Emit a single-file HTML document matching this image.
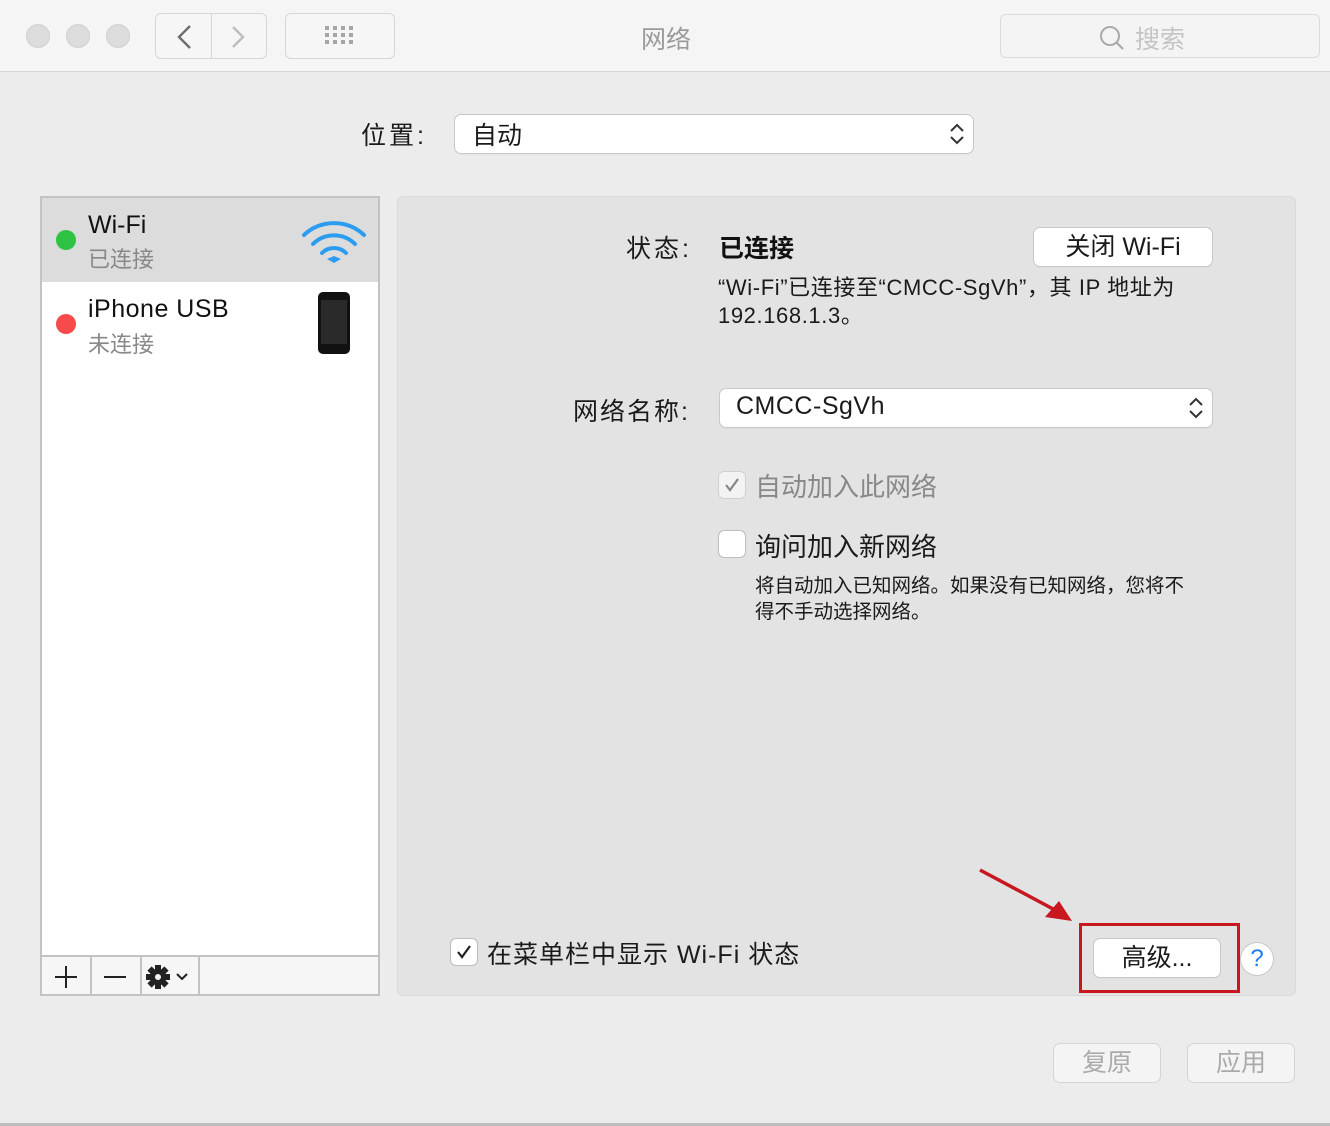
<!DOCTYPE html>
<html><head><meta charset="utf-8">
<style>
*{margin:0;padding:0;box-sizing:border-box}
body{width:1330px;height:1126px;background:#ececec;font-family:"Liberation Sans","Noto Sans CJK SC",sans-serif;color:#222;position:relative;overflow:hidden}
.a{position:absolute;white-space:nowrap}
.btn{position:absolute;background:#fff;border-radius:6px;box-shadow:0 0 0 1px #c8c8c8,0 1px 1px rgba(0,0,0,.15);text-align:center}
.cb{position:absolute;width:26px;height:26px;border-radius:5px;background:#fff;box-shadow:0 0 0 1px #bdbdbd}
</style></head><body>
<div class="a" style="left:0;top:0;width:1330px;height:72px;background:#f5f5f5;border-bottom:1px solid #d4d4d4"></div>
<div class="a" style="left:26px;top:24px;width:24px;height:24px;border-radius:50%;background:#dcdcdc;border:1px solid #d0d0d0"></div>
<div class="a" style="left:66px;top:24px;width:24px;height:24px;border-radius:50%;background:#dcdcdc;border:1px solid #d0d0d0"></div>
<div class="a" style="left:106px;top:24px;width:24px;height:24px;border-radius:50%;background:#dcdcdc;border:1px solid #d0d0d0"></div>
<div class="a" style="left:155px;top:13px;width:57px;height:46px;border:1px solid #d6d6d6;border-radius:6px 0 0 6px;background:#f6f6f6"></div>
<div class="a" style="left:211px;top:13px;width:56px;height:46px;border:1px solid #d6d6d6;border-radius:0 6px 6px 0;background:#f6f6f6"></div>
<svg class="a" style="left:170px;top:22px" width="100" height="30"><path d="M20 4 L9 15 L20 26" stroke="#6e6e6e" stroke-width="2.4" fill="none"/><path d="M63 5 L73 15 L63 25" stroke="#bdbdbd" stroke-width="2.4" fill="none"/></svg>
<div class="a" style="left:285px;top:13px;width:110px;height:46px;border:1px solid #d6d6d6;border-radius:6px;background:#f6f6f6"></div>
<svg class="a" style="left:325px;top:26px" width="30" height="20" fill="#a6a6a6"><rect x="0" y="0" width="4" height="4"/><rect x="8" y="0" width="4" height="4"/><rect x="16" y="0" width="4" height="4"/><rect x="24" y="0" width="4" height="4"/><rect x="0" y="7" width="4" height="4"/><rect x="8" y="7" width="4" height="4"/><rect x="16" y="7" width="4" height="4"/><rect x="24" y="7" width="4" height="4"/><rect x="0" y="14" width="4" height="4"/><rect x="8" y="14" width="4" height="4"/><rect x="16" y="14" width="4" height="4"/><rect x="24" y="14" width="4" height="4"/></svg>
<div class="a" style="left:641px;top:20px;font-size:25px;color:#9a9a9a">网络</div>
<div class="a" style="left:1000px;top:14px;width:320px;height:44px;border:1px solid #dadada;border-radius:6px;background:#f4f4f4"></div>
<svg class="a" style="left:1098px;top:24px" width="30" height="28"><circle cx="12" cy="12" r="9" stroke="#aaa" stroke-width="2" fill="none"/><path d="M18.5 18.5 L25 25" stroke="#aaa" stroke-width="2.2"/></svg>
<div class="a" style="left:1135px;top:20px;font-size:25px;color:#c4c4c4">搜索</div>

<div class="a" style="left:361px;top:116px;font-size:25px;color:#1a1a1a;letter-spacing:3px">位置:</div>
<div class="btn" style="left:455px;top:115px;width:518px;height:38px"></div>
<div class="a" style="left:472px;top:116px;font-size:25px;color:#1a1a1a">自动</div>
<svg class="a" style="left:947px;top:120px" width="20" height="28"><path d="M4 11 L10 5 L16 11 M4 17 L10 23 L16 17" stroke="#333" stroke-width="2" fill="none"/></svg>

<div class="a" style="left:40px;top:196px;width:340px;height:800px;background:#fff;border:2px solid #c3c3c3"></div>
<div class="a" style="left:42px;top:198px;width:336px;height:84px;background:#dcdcdc"></div>
<div class="a" style="left:56px;top:230px;width:20px;height:20px;border-radius:50%;background:#2fc244"></div>
<div class="a" style="left:88px;top:211px;font-size:25px;color:#111">Wi-Fi</div>
<div class="a" style="left:88px;top:242px;font-size:22px;color:#888">已连接</div>
<svg class="a" style="left:300px;top:216px" width="68" height="50"><g stroke="#2c9cf0" stroke-width="4" fill="none" stroke-linecap="round"><path d="M4 19 A44 44 0 0 1 64 19"/><path d="M13 28 A30 30 0 0 1 55 28"/><path d="M22 37 A17 17 0 0 1 46 37"/></g><path d="M27 43 L34 47 L41 43 L34 40 Z" fill="#2c9cf0"/></svg>
<div class="a" style="left:56px;top:314px;width:20px;height:20px;border-radius:50%;background:#f74a4a"></div>
<div class="a" style="left:88px;top:295px;font-size:25px;color:#111;letter-spacing:0.5px">iPhone USB</div>
<div class="a" style="left:88px;top:327px;font-size:22px;color:#888">未连接</div>
<div class="a" style="left:318px;top:292px;width:32px;height:62px;border-radius:5px;background:#111"><div style="position:absolute;left:3px;top:8px;width:26px;height:44px;background:#2a2a2a"></div></div>
<div class="a" style="left:42px;top:955px;width:336px;height:39px;background:#f6f6f6;border-top:2px solid #c3c3c3"></div>
<div class="a" style="left:90px;top:955px;width:2px;height:40px;background:#c3c3c3"></div>
<div class="a" style="left:140px;top:955px;width:2px;height:40px;background:#c3c3c3"></div>
<div class="a" style="left:198px;top:955px;width:2px;height:40px;background:#c3c3c3"></div>
<svg class="a" style="left:54px;top:964px" width="140" height="26"><path d="M12 2 V24 M1 13 H23" stroke="#222" stroke-width="2"/><path d="M50 13 H72" stroke="#222" stroke-width="2"/><g transform="translate(104,13)"><circle r="8" fill="#222"/><g fill="#222"><rect x="-3" y="-12" width="6" height="24"/><rect x="-12" y="-3" width="24" height="6"/><rect x="-3" y="-12" width="6" height="24" transform="rotate(45)"/><rect x="-3" y="-12" width="6" height="24" transform="rotate(-45)"/></g><circle r="3" fill="#f6f6f6"/></g><path d="M123 10 L128 15 L133 10" stroke="#222" stroke-width="2" fill="none"/></svg>

<div class="a" style="left:397px;top:196px;width:899px;height:800px;background:#e3e3e3;border:1px solid #dadada;border-radius:6px"></div>
<div class="a" style="left:626px;top:229px;font-size:25px;color:#1a1a1a;letter-spacing:3px">状态:</div>
<div class="a" style="left:719px;top:229px;font-size:25px;font-weight:bold;color:#111">已连接</div>
<div class="btn" style="left:1034px;top:228px;width:178px;height:38px;font-size:25px;line-height:38px;color:#1a1a1a">关闭 Wi-Fi</div>
<div class="a" style="left:718px;top:274px;font-size:22px;line-height:28px;color:#1a1a1a;letter-spacing:0.6px">“Wi-Fi”已连接至“CMCC-SgVh”，其 IP 地址为<br>192.168.1.3。</div>
<div class="a" style="left:573px;top:392px;font-size:25px;color:#1a1a1a;letter-spacing:2px">网络名称:</div>
<div class="btn" style="left:720px;top:389px;width:492px;height:38px"></div>
<div class="a" style="left:736px;top:392px;font-size:25px;color:#1a1a1a;letter-spacing:0.5px">CMCC-SgVh</div>
<svg class="a" style="left:1186px;top:394px" width="20" height="28"><path d="M4 11 L10 5 L16 11 M4 17 L10 23 L16 17" stroke="#333" stroke-width="2" fill="none"/></svg>
<div class="cb" style="left:719px;top:472px;background:#f3f3f3;box-shadow:0 0 0 1px #d0d0d0"></div>
<svg class="a" style="left:722px;top:475px" width="20" height="20"><path d="M4 10 L8 15 L16 4" stroke="#888" stroke-width="2.2" fill="none"/></svg>
<div class="a" style="left:755px;top:467px;font-size:26px;color:#888">自动加入此网络</div>
<div class="cb" style="left:719px;top:531px"></div>
<div class="a" style="left:755px;top:527px;font-size:26px;color:#1a1a1a">询问加入新网络</div>
<div class="a" style="left:755px;top:573px;font-size:19.5px;line-height:26px;color:#1a1a1a">将自动加入已知网络。如果没有已知网络，您将不<br>得不手动选择网络。</div>
<div class="cb" style="left:451px;top:939px"></div>
<svg class="a" style="left:454px;top:942px" width="20" height="20"><path d="M4 10 L8 15 L16 4" stroke="#222" stroke-width="2.2" fill="none"/></svg>
<div class="a" style="left:487px;top:935px;font-size:25px;color:#1a1a1a;letter-spacing:1px">在菜单栏中显示 Wi-Fi 状态</div>
<div class="btn" style="left:1094px;top:939px;width:126px;height:38px;font-size:25px;line-height:38px;color:#1a1a1a">高级...</div>
<div class="a" style="left:1079px;top:923px;width:161px;height:70px;border:3px solid #c8171e"></div>
<div class="a" style="left:1241px;top:943px;width:32px;height:32px;border-radius:50%;background:#fff;box-shadow:0 0 0 1px #c8c8c8;text-align:center;font-size:24px;line-height:32px;color:#1d7ff5">?</div>
<svg class="a" style="left:975px;top:865px" width="105" height="60"><path d="M5 5 L80 45" stroke="#c8171e" stroke-width="3.5"/><path d="M97 56 L70 52 L84 36 Z" fill="#c8171e"/></svg>

<div class="btn" style="left:1054px;top:1044px;width:106px;height:38px;background:#f4f4f4;font-size:25px;line-height:38px;color:#aaa;box-shadow:0 0 0 1px #d4d4d4">复原</div>
<div class="btn" style="left:1188px;top:1044px;width:106px;height:38px;background:#f4f4f4;font-size:25px;line-height:38px;color:#aaa;box-shadow:0 0 0 1px #d4d4d4">应用</div>
<div class="a" style="left:0;top:1123px;width:1330px;height:3px;background:#bdbdbd"></div>
</body></html>
